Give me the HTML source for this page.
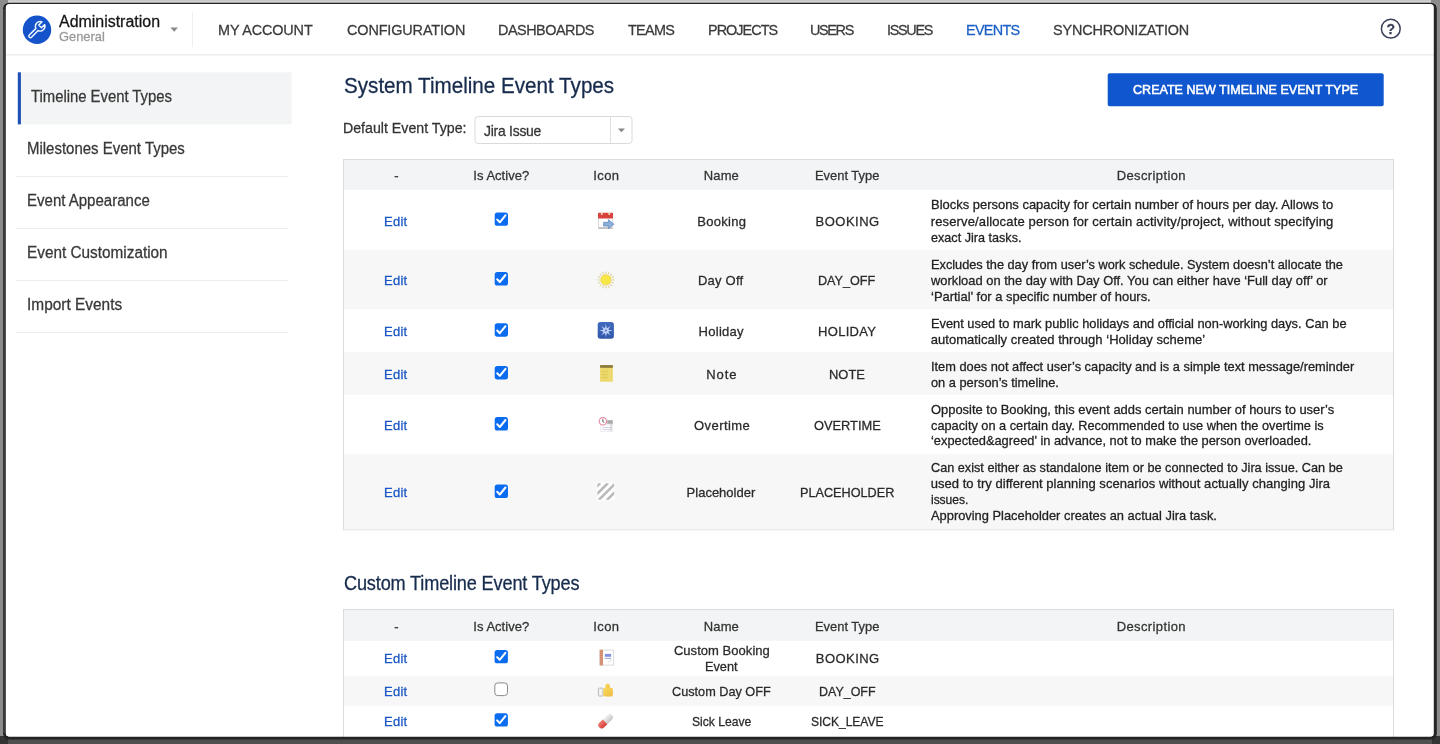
<!DOCTYPE html>
<html lang="en">
<head>
<meta charset="utf-8">
<title>Timeline Event Types</title>
<style>
html,body{margin:0;padding:0;}
body{width:1440px;height:744px;overflow:hidden;position:relative;background:#8b8b8b;
  font-family:"Liberation Sans",sans-serif;}
.abs{position:absolute;}
#txt{position:absolute;left:0;top:0;width:1440px;height:744px;will-change:transform;}
.t{position:absolute;transform-origin:0 0;white-space:pre;font-family:"Liberation Sans",sans-serif;-webkit-text-stroke:0.28px currentColor;}
/* outer screenshot frame */
#topstrip{left:8px;top:0;width:1423px;height:3px;background:linear-gradient(#c6c6c6,#dadada);}
#botstrip{left:0;top:739px;width:1440px;height:5px;background:#4f4f4f;}
#botl{left:0;top:736px;width:8px;height:8px;background:#343434;}
#botr{left:1432px;top:736px;width:8px;height:8px;background:#343434;}
#page{left:3.2px;top:2.8px;width:1428.6px;height:731.8px;border:2.6px solid #242424;border-radius:5px;background:#fff;}
/* header */
#hline{left:6px;top:53.5px;width:1428px;height:1px;background:#e4e4e4;}
#hdiv{left:192px;top:12px;width:1px;height:35px;background:#ededed;}
/* sidebar */
#sbact{left:21px;top:72.3px;width:270.5px;height:52.1px;background:#f3f4f5;}
#sbbar{left:18px;top:72.3px;width:3px;height:52.1px;background:#1d4fb4;}
.sbl{left:16px;width:272px;height:1px;background:#ececec;}
/* button */
#btn{left:1107.7px;top:73.3px;width:276px;height:33px;background:#0f56cf;border-radius:2px;}
/* select */
#sel{left:475px;top:116.3px;width:156.5px;height:26.2px;border:1px solid #dcdcdc;border-radius:3px;background:#fff;}
#seldiv{left:610px;top:117px;width:1px;height:26px;background:#e2e2e2;}
/* tables */
.tbl{left:343.5px;width:1049px;border:1px solid #dddddd;background:#fff;}
.th{left:344.5px;width:1049px;background:#f3f4f5;}
.alt{left:344.5px;width:1049px;background:#f7f7f7;}
/* checkboxes */
.cb{left:494.7px;width:13.3px;height:13.3px;border-radius:2.6px;background:#0b6cf0;}
.cbu{left:494.5px;width:11.6px;height:11.6px;border-radius:3px;background:#fff;border:1px solid #8c8c8c;}
.ic{left:598px;width:16px;height:16px;}
</style>
</head>
<body>
<svg class="abs" style="left:0;top:0" width="1440" height="744" viewBox="0 0 1440 744">
<defs>
<linearGradient id="tg" x1="0" y1="0" x2="0" y2="1"><stop offset="0" stop-color="#c4c4c4"/><stop offset="1" stop-color="#dcdcdc"/></linearGradient>
<linearGradient id="snow" x1="0" y1="0" x2="0" y2="1"><stop offset="0" stop-color="#4169bd"/><stop offset="1" stop-color="#2f57a9"/></linearGradient>
<linearGradient id="thumb" x1="0" y1="0" x2="1" y2="1"><stop offset="0" stop-color="#f8dc58"/><stop offset="1" stop-color="#f0b848"/></linearGradient>
<linearGradient id="pillw" x1="0" y1="0" x2="0" y2="1"><stop offset="0" stop-color="#f4f4f4"/><stop offset="1" stop-color="#c4c4c4"/></linearGradient>
<linearGradient id="pillr" x1="0" y1="0" x2="0" y2="1"><stop offset="0" stop-color="#f07a6c"/><stop offset="1" stop-color="#d8403c"/></linearGradient>
<filter id="soft" x="-10%" y="-10%" width="120%" height="120%"><feGaussianBlur stdDeviation="0.35"/></filter>
<clipPath id="hatch"><rect x="597.4" y="483.2" width="16.8" height="16.6"/></clipPath>
</defs>

<rect width="1440" height="744" fill="#ffffff"/>

<!-- ===== header ===== -->
<rect x="6" y="53.9" width="1428" height="1.7" fill="#eeeeee"/>
<rect x="191.9" y="12" width="1" height="35" fill="#eeeeee"/>
<circle cx="37" cy="29.8" r="14.2" fill="#1553cb"/>
<g transform="translate(19,12)" fill="none" stroke="#f0f9ff" stroke-width="1.45" stroke-linejoin="round" stroke-linecap="round">
<path d="M22.93 9.88 A4.75 4.75 0 0 0 16.93 16.38 L10.30 23.00 A1.55 1.55 0 0 0 12.50 25.20 L19.12 18.57 A4.75 4.75 0 0 0 25.62 12.57 L22.40 15.78 L19.72 13.10 Z"/>
</g>
<path d="M170.4 27.6 L178 27.6 L174.2 31.8 Z" fill="#8a8a8a"/>
<!-- help -->
<circle cx="1390.8" cy="28.7" r="9.4" fill="none" stroke="#3b4059" stroke-width="1.5"/>

<!-- ===== sidebar ===== -->
<rect x="21" y="72.3" width="270.5" height="52.1" fill="#f3f4f5"/>
<rect x="17.8" y="72.3" width="3.1" height="52.1" fill="#1d4fb4"/>
<rect x="16" y="176" width="272" height="1" fill="#ececec"/>
<rect x="16" y="228" width="272" height="1" fill="#ececec"/>
<rect x="16" y="280" width="272" height="1" fill="#ececec"/>
<rect x="16" y="332" width="272" height="1" fill="#ececec"/>

<!-- ===== button / select ===== -->
<rect x="1107.7" y="73.3" width="276" height="33" rx="2" fill="#0f56cf"/>
<rect x="475" y="116.5" width="157" height="27" rx="3" fill="#fff" stroke="#dadada" stroke-width="1"/>
<rect x="610" y="117" width="1" height="26" fill="#e0e0e0"/>
<path d="M617.9 128.6 L625 128.6 L621.45 132.3 Z" fill="#888"/>

<!-- ===== table 1 ===== -->
<rect x="343.5" y="159.5" width="1050" height="370.3" fill="#fff" stroke="#dcdcdc" stroke-width="1"/>
<rect x="344" y="160" width="1049" height="30" fill="#f3f4f5"/>
<rect x="344" y="249.6" width="1049" height="59.8" fill="#f7f7f7"/>
<rect x="344" y="352.1" width="1049" height="42.7" fill="#f7f7f7"/>
<rect x="344" y="454.3" width="1049" height="75" fill="#f7f7f7"/>

<!-- ===== table 2 ===== -->
<rect x="343.5" y="609.5" width="1050" height="140" fill="#fff" stroke="#dcdcdc" stroke-width="1"/>
<rect x="344" y="610" width="1049" height="30.8" fill="#f3f4f5"/>
<rect x="344" y="675.8" width="1049" height="30.1" fill="#f7f7f7"/>

<!-- checkboxes -->
<g transform="translate(494.7,212.4)"><rect width="13.3" height="13.4" rx="2.6" fill="#0b6cf0"/><path d="M2.5 7.2 L5.1 9.9 L10.8 2.9" fill="none" stroke="#fff" stroke-width="2" stroke-linecap="round" stroke-linejoin="round"/></g>
<g transform="translate(494.7,272.1)"><rect width="13.3" height="13.4" rx="2.6" fill="#0b6cf0"/><path d="M2.5 7.2 L5.1 9.9 L10.8 2.9" fill="none" stroke="#fff" stroke-width="2" stroke-linecap="round" stroke-linejoin="round"/></g>
<g transform="translate(494.7,323.3)"><rect width="13.3" height="13.4" rx="2.6" fill="#0b6cf0"/><path d="M2.5 7.2 L5.1 9.9 L10.8 2.9" fill="none" stroke="#fff" stroke-width="2" stroke-linecap="round" stroke-linejoin="round"/></g>
<g transform="translate(494.7,366.0)"><rect width="13.3" height="13.4" rx="2.6" fill="#0b6cf0"/><path d="M2.5 7.2 L5.1 9.9 L10.8 2.9" fill="none" stroke="#fff" stroke-width="2" stroke-linecap="round" stroke-linejoin="round"/></g>
<g transform="translate(494.7,417.1)"><rect width="13.3" height="13.4" rx="2.6" fill="#0b6cf0"/><path d="M2.5 7.2 L5.1 9.9 L10.8 2.9" fill="none" stroke="#fff" stroke-width="2" stroke-linecap="round" stroke-linejoin="round"/></g>
<g transform="translate(494.7,484.6)"><rect width="13.3" height="13.4" rx="2.6" fill="#0b6cf0"/><path d="M2.5 7.2 L5.1 9.9 L10.8 2.9" fill="none" stroke="#fff" stroke-width="2" stroke-linecap="round" stroke-linejoin="round"/></g>
<g transform="translate(494.6,649.9)"><rect width="13.3" height="13.4" rx="2.6" fill="#0b6cf0"/><path d="M2.5 7.2 L5.1 9.9 L10.8 2.9" fill="none" stroke="#fff" stroke-width="2" stroke-linecap="round" stroke-linejoin="round"/></g>
<g transform="translate(494.3,682.4)"><rect x="0.5" y="0.5" width="12.7" height="12.7" rx="3" fill="#fff" stroke="#8a8a8a" stroke-width="1"/></g>
<g transform="translate(494.6,713.2)"><rect width="13.3" height="13.4" rx="2.6" fill="#0b6cf0"/><path d="M2.5 7.2 L5.1 9.9 L10.8 2.9" fill="none" stroke="#fff" stroke-width="2" stroke-linecap="round" stroke-linejoin="round"/></g>

<!-- ===== icons ===== -->
<g filter="url(#soft)">
<!-- booking -->
<g transform="translate(598,212.7)">
<rect x="0.4" y="1" width="14.4" height="14.8" fill="#fff" stroke="#cfcfcf" stroke-width="0.8"/>
<rect x="0" y="0" width="15" height="5.8" rx="0.8" fill="#d8423e"/>
<rect x="2.9" y="-0.8" width="1.7" height="3" fill="#f3dcc8"/><rect x="10.4" y="-0.8" width="1.7" height="3" fill="#f3dcc8"/>
<rect x="0.6" y="14.6" width="13.6" height="1.3" fill="#b4b4b4"/>
<path d="M5.6 9.6 L10.4 9.6 L10.4 6.9 L15.9 11.5 L10.4 15.8 L10.4 13.4 L5.6 13.4 Z" fill="#8bafd9" stroke="#5a85bf" stroke-width="0.7"/>
</g>
<!-- day off (sun) -->
<g transform="translate(605.9,279.9)">
<g stroke="#d9d49a" stroke-width="1.3" stroke-linecap="round" opacity="0.85">
<path d="M0 -6.6V-8M0 6.6V8M-6.6 0H-8M6.6 0H8M4.7 -4.7L5.7 -5.7M-4.7 -4.7L-5.7 -5.7M4.7 4.7L5.7 5.7M-4.7 4.7L-5.7 5.7M2.5 -6.1L3.1 -7.4M-2.5 -6.1L-3.1 -7.4M2.5 6.1L3.1 7.4M-2.5 6.1L-3.1 7.4M6.1 2.5L7.4 3.1M6.1 -2.5L7.4 -3.1M-6.1 2.5L-7.4 3.1M-6.1 -2.5L-7.4 -3.1"/>
</g>
<circle r="5.1" fill="#f7e844" stroke="#f3cf52" stroke-width="0.9"/>
</g>
<!-- holiday (snowflake) -->
<g transform="translate(597.7,322.1)">
<rect width="16.2" height="16.6" rx="2.6" fill="url(#snow)"/>
<polygon points="8.20,1.60 9.00,6.56 13.08,3.62 10.14,7.70 15.10,8.50 10.14,9.30 13.08,13.38 9.00,10.44 8.20,15.40 7.40,10.44 3.32,13.38 6.26,9.30 1.30,8.50 6.26,7.70 3.32,3.62 7.40,6.56" fill="#cfdcfb"/>
<circle cx="8.2" cy="8.5" r="3.2" fill="#b9ccf7" opacity="0.75"/><circle cx="8.2" cy="8.5" r="1" fill="#5577c0"/>
</g>
<!-- note -->
<g transform="translate(600.1,365.1)">
<rect width="12.7" height="16.6" fill="#ecd868"/>
<rect width="12.7" height="2.7" fill="#8b7a3c"/>
<rect x="8.4" y="3" width="2.4" height="13" fill="#f0dc78" opacity="0.7"/>
<rect x="1.5" y="6" width="6" height="0.8" fill="#dcc658"/><rect x="1.5" y="9" width="6" height="0.8" fill="#dcc658"/><rect x="1.5" y="12" width="6" height="0.8" fill="#dcc658"/>
</g>
<!-- overtime -->
<g>
<rect x="600.6" y="424.6" width="12.2" height="6.8" fill="#fafafc" stroke="#e9e9ef" stroke-width="0.7"/>
<rect x="607.2" y="420.2" width="5.6" height="3.6" fill="#a8a8a8"/>
<rect x="602.5" y="427" width="8.6" height="0.8" fill="#c9cfe6"/><rect x="602.5" y="429" width="8.6" height="0.8" fill="#d6cfe0"/>
<rect x="610.6" y="424" width="1" height="7" fill="#c4c4c4"/>
<circle cx="602.9" cy="421.3" r="3.7" fill="#fff" stroke="#e78ca1" stroke-width="1.15"/>
<path d="M602.9 419.3V421.6L604.1 422.8" fill="none" stroke="#444" stroke-width="1"/>
</g>
<!-- placeholder hatch -->
<rect x="596.8" y="482.6" width="18" height="17.8" fill="#ffffff" opacity="0.9"/>
<g clip-path="url(#hatch)" stroke="#b9b9b9" stroke-width="2.5">
<path d="M583.2 500L600.2 483M591 500L608 483M598.8 500L615.8 483M606.6 500.4L623.6 483.4"/>
</g>
<!-- custom booking (notebook) -->
<g transform="translate(599.7,649.7)">
<rect x="0.4" y="0.4" width="13.6" height="15" fill="#fff" stroke="#d2d2d2" stroke-width="0.8"/>
<rect x="0" y="0" width="3.3" height="15.8" fill="#dd9e80"/>
<g stroke="#c27a62" stroke-width="0.7"><path d="M0 1.6H3.3M0 3.7H3.3M0 5.8H3.3M0 7.9H3.3M0 10H3.3M0 12.1H3.3M0 14.2H3.3"/></g>
<rect x="5.1" y="4.2" width="6.3" height="2.9" fill="#8291e2"/>
<rect x="5.1" y="8.2" width="6.3" height="0.9" fill="#8c9ad6"/>
<path d="M8.6 12.6L11.6 10" stroke="#cfd3d8" stroke-width="0.9"/>
</g>
<!-- thumbs up -->
<g>
<rect x="598.4" y="688.1" width="4.6" height="8" rx="0.8" fill="#f1f1f1" stroke="#b2b2b2" stroke-width="0.9"/>
<rect x="605.4" y="683.7" width="4.4" height="7" rx="2" fill="url(#thumb)"/>
<rect x="603.2" y="687.8" width="9.7" height="8.8" rx="2.2" fill="url(#thumb)"/>
</g>
<!-- pill -->
<g transform="translate(605.6,721.2) rotate(-44)">
<rect x="-8.8" y="-3.3" width="17.6" height="6.6" rx="3.3" fill="url(#pillw)"/>
<path d="M-0.8 -3.3H-5.5A3.3 3.3 0 0 0 -5.5 3.3H-0.8Z" fill="url(#pillr)"/>
</g>
</g>
<!-- ===== outer screenshot frame (overlay) ===== -->
<path fill-rule="evenodd" fill="#8b8b8b" d="M0 0H1440V744H0Z M8.5 2.7H1431.4A5.5 5.5 0 0 1 1436.9 8.2V734A5.5 5.5 0 0 1 1431.4 739.5H8.5A5.5 5.5 0 0 1 3 734V8.2A5.5 5.5 0 0 1 8.5 2.7Z"/>
<rect x="8" y="0" width="1423" height="2.8" fill="url(#tg)"/>
<rect x="0" y="739" width="1440" height="5" fill="#4f4f4f"/>
<rect x="0" y="736" width="8" height="8" fill="#343434"/>
<rect x="1432" y="736" width="8" height="8" fill="#343434"/>
<path fill-rule="evenodd" fill="#242424" d="M8.5 2.7H1431.4A5.5 5.5 0 0 1 1436.9 8.2V734A5.5 5.5 0 0 1 1431.4 739.5H8.5A5.5 5.5 0 0 1 3 734V8.2A5.5 5.5 0 0 1 8.5 2.7Z M9.3 4H1430.3A3.5 3.5 0 0 1 1433.8 7.5V733.3A3.5 3.5 0 0 1 1430.3 736.8H9.3A3.5 3.5 0 0 1 5.8 733.3V7.5A3.5 3.5 0 0 1 9.3 4Z"/>
<rect x="3" y="9" width="2.8" height="724" fill="#6a6a6a" opacity="0.28"/>
</svg>
<div id="txt">
<span class="t" style="left:1386.6px;top:21.2px;font-size:14px;line-height:16px;font-weight:700;color:#3b4059;">?</span>
<span class="t" style="left:59.30px;top:13.00px;font-size:16px;line-height:17px;letter-spacing:0.000px;color:#161616;transform:scaleX(0.9962);">Administration</span>
<span class="t" style="left:59.30px;top:29.00px;font-size:13px;line-height:15px;letter-spacing:0.000px;color:#999;transform:scaleX(0.9913);">General</span>
<span class="t" style="left:217.82px;top:21.00px;font-size:15.5px;line-height:17px;letter-spacing:-0.136px;color:#3a3a3a;transform:scaleX(0.9300);">MY ACCOUNT</span>
<span class="t" style="left:346.90px;top:21.00px;font-size:15.5px;line-height:17px;letter-spacing:-0.133px;color:#3a3a3a;transform:scaleX(0.9300);">CONFIGURATION</span>
<span class="t" style="left:497.67px;top:21.00px;font-size:15.5px;line-height:17px;letter-spacing:-0.531px;color:#3a3a3a;transform:scaleX(0.9300);">DASHBOARDS</span>
<span class="t" style="left:628.10px;top:21.00px;font-size:15.5px;line-height:17px;letter-spacing:-0.738px;color:#3a3a3a;transform:scaleX(0.9300);">TEAMS</span>
<span class="t" style="left:707.82px;top:21.00px;font-size:15.5px;line-height:17px;letter-spacing:-1.043px;color:#3a3a3a;transform:scaleX(0.9300);">PROJECTS</span>
<span class="t" style="left:810.27px;top:21.00px;font-size:15.5px;line-height:17px;letter-spacing:-1.453px;color:#3a3a3a;transform:scaleX(0.9300);">USERS</span>
<span class="t" style="left:887.37px;top:21.00px;font-size:15.5px;line-height:17px;letter-spacing:-1.410px;color:#3a3a3a;transform:scaleX(0.9300);">ISSUES</span>
<span class="t" style="left:966.07px;top:21.00px;font-size:15.5px;line-height:17px;letter-spacing:-0.754px;color:#1b5fc6;transform:scaleX(0.9300);">EVENTS</span>
<span class="t" style="left:1053.20px;top:21.00px;font-size:15.5px;line-height:17px;letter-spacing:-0.155px;color:#3a3a3a;transform:scaleX(0.9300);">SYNCHRONIZATION</span>
<span class="t" style="left:31.20px;top:88.00px;font-size:16px;line-height:17px;letter-spacing:-0.028px;color:#383838;transform:scaleX(0.9300);">Timeline Event Types</span>
<span class="t" style="left:26.96px;top:140.00px;font-size:16px;line-height:17px;letter-spacing:0.000px;color:#383838;transform:scaleX(0.9357);">Milestones Event Types</span>
<span class="t" style="left:26.96px;top:192.00px;font-size:16px;line-height:17px;letter-spacing:0.000px;color:#383838;transform:scaleX(0.9387);">Event Appearance</span>
<span class="t" style="left:26.94px;top:244.00px;font-size:16px;line-height:17px;letter-spacing:0.000px;color:#383838;transform:scaleX(0.9585);">Event Customization</span>
<span class="t" style="left:26.94px;top:296.00px;font-size:16px;line-height:17px;letter-spacing:0.000px;color:#383838;transform:scaleX(0.9643);">Import Events</span>
<span class="t" style="left:344.40px;top:74.00px;font-size:21.5px;line-height:24px;letter-spacing:0.000px;color:#172b4d;transform:scaleX(0.9593);">System Timeline Event Types</span>
<span class="t" style="left:343.45px;top:119.00px;font-size:15px;line-height:17px;letter-spacing:0.000px;color:#333;transform:scaleX(0.9451);">Default Event Type:</span>
<span class="t" style="left:484.20px;top:122.00px;font-size:15px;line-height:17px;letter-spacing:-0.277px;color:#333;transform:scaleX(0.9300);">Jira Issue</span>
<span class="t" style="left:1133.00px;top:82.00px;font-size:13.5px;line-height:15px;letter-spacing:0.000px;color:#fff;transform:scaleX(0.9301);-webkit-text-stroke-width:0.55px;">CREATE NEW TIMELINE EVENT TYPE</span>
<span class="t" style="left:344.40px;top:572.00px;font-size:19.5px;line-height:22px;letter-spacing:-0.166px;color:#172b4d;transform:scaleX(0.9300);">Custom Timeline Event Types</span>
<span class="t" style="left:394.20px;top:168.00px;font-size:13px;line-height:15px;letter-spacing:0.000px;color:#333;">-</span>
<span class="t" style="left:473.30px;top:168.00px;font-size:13px;line-height:15px;letter-spacing:0.027px;color:#333;">Is Active?</span>
<span class="t" style="left:593.30px;top:168.00px;font-size:13px;line-height:15px;letter-spacing:0.379px;color:#333;">Icon</span>
<span class="t" style="left:703.70px;top:168.00px;font-size:13px;line-height:15px;letter-spacing:0.162px;color:#333;">Name</span>
<span class="t" style="left:815.31px;top:168.00px;font-size:13px;line-height:15px;letter-spacing:0.000px;color:#333;transform:scaleX(0.9930);">Event Type</span>
<span class="t" style="left:1116.70px;top:168.00px;font-size:13px;line-height:15px;letter-spacing:0.380px;color:#333;">Description</span>
<span class="t" style="left:394.20px;top:619.00px;font-size:13px;line-height:15px;letter-spacing:0.000px;color:#333;">-</span>
<span class="t" style="left:473.30px;top:619.00px;font-size:13px;line-height:15px;letter-spacing:0.027px;color:#333;">Is Active?</span>
<span class="t" style="left:593.30px;top:619.00px;font-size:13px;line-height:15px;letter-spacing:0.379px;color:#333;">Icon</span>
<span class="t" style="left:703.70px;top:619.00px;font-size:13px;line-height:15px;letter-spacing:0.162px;color:#333;">Name</span>
<span class="t" style="left:815.31px;top:619.00px;font-size:13px;line-height:15px;letter-spacing:0.000px;color:#333;transform:scaleX(0.9930);">Event Type</span>
<span class="t" style="left:1116.70px;top:619.00px;font-size:13px;line-height:15px;letter-spacing:0.380px;color:#333;">Description</span>
<span class="t" style="left:384.00px;top:214.00px;font-size:13px;line-height:15px;letter-spacing:0.265px;color:#1a57c4;">Edit</span>
<span class="t" style="left:697.30px;top:214.00px;font-size:13px;line-height:15px;letter-spacing:0.293px;color:#2b2b2b;">Booking</span>
<span class="t" style="left:815.60px;top:214.00px;font-size:13px;line-height:15px;letter-spacing:0.479px;color:#2b2b2b;">BOOKING</span>
<span class="t" style="left:384.00px;top:273.00px;font-size:13px;line-height:15px;letter-spacing:0.266px;color:#1a57c4;">Edit</span>
<span class="t" style="left:698.00px;top:273.00px;font-size:13px;line-height:15px;letter-spacing:0.210px;color:#2b2b2b;">Day Off</span>
<span class="t" style="left:818.43px;top:273.00px;font-size:13px;line-height:15px;letter-spacing:0.000px;color:#2b2b2b;transform:scaleX(0.9713);">DAY_OFF</span>
<span class="t" style="left:384.00px;top:324.00px;font-size:13px;line-height:15px;letter-spacing:0.265px;color:#1a57c4;">Edit</span>
<span class="t" style="left:698.60px;top:324.00px;font-size:13px;line-height:15px;letter-spacing:0.262px;color:#2b2b2b;">Holiday</span>
<span class="t" style="left:818.10px;top:324.00px;font-size:13px;line-height:15px;letter-spacing:0.291px;color:#2b2b2b;">HOLIDAY</span>
<span class="t" style="left:384.00px;top:367.00px;font-size:13px;line-height:15px;letter-spacing:0.266px;color:#1a57c4;">Edit</span>
<span class="t" style="left:706.30px;top:367.00px;font-size:13px;line-height:15px;letter-spacing:0.910px;color:#2b2b2b;">Note</span>
<span class="t" style="left:829.41px;top:367.00px;font-size:13px;line-height:15px;letter-spacing:0.000px;color:#2b2b2b;transform:scaleX(0.9936);">NOTE</span>
<span class="t" style="left:384.00px;top:418.00px;font-size:13px;line-height:15px;letter-spacing:0.265px;color:#1a57c4;">Edit</span>
<span class="t" style="left:694.00px;top:418.00px;font-size:13px;line-height:15px;letter-spacing:0.443px;color:#2b2b2b;">Overtime</span>
<span class="t" style="left:814.00px;top:418.00px;font-size:13px;line-height:15px;letter-spacing:0.000px;color:#2b2b2b;transform:scaleX(0.9860);">OVERTIME</span>
<span class="t" style="left:384.00px;top:485.00px;font-size:13px;line-height:15px;letter-spacing:0.266px;color:#1a57c4;">Edit</span>
<span class="t" style="left:686.60px;top:485.00px;font-size:13px;line-height:15px;letter-spacing:0.001px;color:#2b2b2b;">Placeholder</span>
<span class="t" style="left:800.03px;top:485.00px;font-size:13px;line-height:15px;letter-spacing:0.000px;color:#2b2b2b;transform:scaleX(0.9746);">PLACEHOLDER</span>
<span class="t" style="left:384.00px;top:651.00px;font-size:13px;line-height:15px;letter-spacing:0.265px;color:#1a57c4;">Edit</span>
<span class="t" style="left:384.00px;top:684.00px;font-size:13px;line-height:15px;letter-spacing:0.266px;color:#1a57c4;">Edit</span>
<span class="t" style="left:384.00px;top:714.00px;font-size:13px;line-height:15px;letter-spacing:0.265px;color:#1a57c4;">Edit</span>
<span class="t" style="left:673.90px;top:643.00px;font-size:13px;line-height:15px;letter-spacing:0.042px;color:#2b2b2b;">Custom Booking</span>
<span class="t" style="left:704.52px;top:659.00px;font-size:13px;line-height:15px;letter-spacing:0.000px;color:#2b2b2b;transform:scaleX(0.9801);">Event</span>
<span class="t" style="left:815.80px;top:651.00px;font-size:13px;line-height:15px;letter-spacing:0.446px;color:#2b2b2b;">BOOKING</span>
<span class="t" style="left:672.20px;top:684.00px;font-size:13px;line-height:15px;letter-spacing:0.000px;color:#2b2b2b;transform:scaleX(0.9766);">Custom Day OFF</span>
<span class="t" style="left:818.74px;top:684.00px;font-size:13px;line-height:15px;letter-spacing:0.000px;color:#2b2b2b;transform:scaleX(0.9588);">DAY_OFF</span>
<span class="t" style="left:691.90px;top:714.00px;font-size:13px;line-height:15px;letter-spacing:0.000px;color:#2b2b2b;transform:scaleX(0.9328);">Sick Leave</span>
<span class="t" style="left:811.00px;top:714.00px;font-size:13px;line-height:15px;letter-spacing:-0.056px;color:#2b2b2b;transform:scaleX(0.9300);">SICK_LEAVE</span>
<span class="t" style="left:930.70px;top:197.00px;font-size:13px;line-height:15px;letter-spacing:0.000px;color:#222;transform:scaleX(0.9962);">Blocks persons capacity for certain number of hours per day. Allows to</span>
<span class="t" style="left:930.70px;top:214.00px;font-size:13px;line-height:15px;letter-spacing:0.145px;color:#222;">reserve/allocate person for certain activity/project, without specifying</span>
<span class="t" style="left:930.70px;top:230.00px;font-size:13px;line-height:15px;letter-spacing:0.000px;color:#222;transform:scaleX(0.9704);">exact Jira tasks.</span>
<span class="t" style="left:930.72px;top:257.00px;font-size:13px;line-height:15px;letter-spacing:0.000px;color:#222;transform:scaleX(0.9806);">Excludes the day from user’s work schedule. System doesn’t allocate the</span>
<span class="t" style="left:930.69px;top:273.00px;font-size:13px;line-height:15px;letter-spacing:0.000px;color:#222;transform:scaleX(0.9926);">workload on the day with Day Off. You can either have ‘Full day off’ or</span>
<span class="t" style="left:930.70px;top:289.00px;font-size:13px;line-height:15px;letter-spacing:0.000px;color:#222;transform:scaleX(0.9959);">‘Partial’ for a specific number of hours.</span>
<span class="t" style="left:930.71px;top:316.00px;font-size:13px;line-height:15px;letter-spacing:0.000px;color:#222;transform:scaleX(0.9869);">Event used to mark public holidays and official non-working days. Can be</span>
<span class="t" style="left:930.70px;top:332.00px;font-size:13px;line-height:15px;letter-spacing:0.046px;color:#222;">automatically created through ‘Holiday scheme’</span>
<span class="t" style="left:930.72px;top:359.00px;font-size:13px;line-height:15px;letter-spacing:0.000px;color:#222;transform:scaleX(0.9842);">Item does not affect user’s capacity and is a simple text message/reminder</span>
<span class="t" style="left:930.70px;top:375.00px;font-size:13px;line-height:15px;letter-spacing:0.000px;color:#222;transform:scaleX(0.9851);">on a person’s timeline.</span>
<span class="t" style="left:930.70px;top:402.00px;font-size:13px;line-height:15px;letter-spacing:0.000px;color:#222;transform:scaleX(0.9938);">Opposite to Booking, this event adds certain number of hours to user’s</span>
<span class="t" style="left:930.70px;top:418.00px;font-size:13px;line-height:15px;letter-spacing:0.000px;color:#222;transform:scaleX(0.9815);">capacity on a certain day. Recommended to use when the overtime is</span>
<span class="t" style="left:930.70px;top:433.00px;font-size:13px;line-height:15px;letter-spacing:0.000px;color:#222;transform:scaleX(0.9868);">‘expected&amp;agreed' in advance, not to make the person overloaded.</span>
<span class="t" style="left:930.70px;top:460.00px;font-size:13px;line-height:15px;letter-spacing:0.000px;color:#222;transform:scaleX(0.9757);">Can exist either as standalone item or be connected to Jira issue. Can be</span>
<span class="t" style="left:930.70px;top:476.00px;font-size:13px;line-height:15px;letter-spacing:0.040px;color:#222;">used to try different planning scenarios without actually changing Jira</span>
<span class="t" style="left:930.70px;top:492.00px;font-size:13px;line-height:15px;letter-spacing:-0.061px;color:#222;transform:scaleX(0.9300);">issues.</span>
<span class="t" style="left:930.70px;top:508.00px;font-size:13px;line-height:15px;letter-spacing:0.000px;color:#222;transform:scaleX(0.9891);">Approving Placeholder creates an actual Jira task.</span>
</div>

</body>
</html>
